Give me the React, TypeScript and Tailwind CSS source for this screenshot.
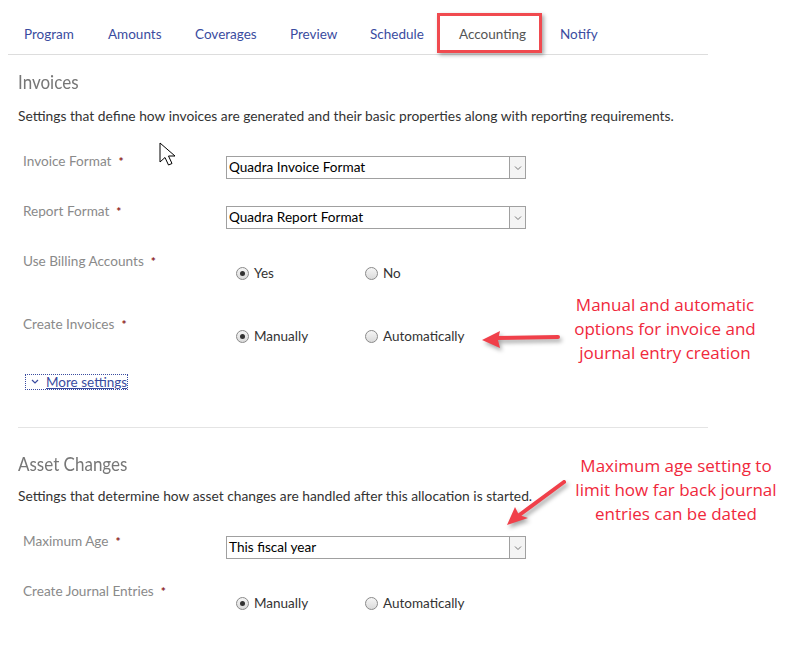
import React from 'react';

const tabs = [
  { name: 'Program', w: 'w-[84px]' },
  { name: 'Amounts', w: 'w-[87px]' },
  { name: 'Coverages', w: 'w-[95px]' },
  { name: 'Preview', w: 'w-[80px]' },
  { name: 'Schedule', w: 'w-[89px]' },
  { name: 'Accounting', w: 'w-[101px]' },
  { name: 'Notify', w: 'w-[80px]' },
];

function Req() {
  return <span className="ml-[7px] text-[#8b1a1a] font-bold text-[12px]">*</span>;
}

function Select({ value }: { value: string }) {
  return (
    <div className="flex w-[300px] h-[23px] border border-[#a0a0a0] bg-white">
      <div className="flex-1 pl-[2px] text-[13.6px] leading-[21px] text-black">{value}</div>
      <div className="w-[16px] border-l border-[#a0a0a0] bg-[#f4f4f4] flex items-center justify-center">
        <svg width="8" height="6" viewBox="0 0 8 6">
          <path d="M1 1.5 L4 4.5 L7 1.5" fill="none" stroke="#777" strokeWidth="1" />
        </svg>
      </div>
    </div>
  );
}

function Radio({ label, checked, w }: { label: string; checked?: boolean; w?: string }) {
  return (
    <div className={`flex items-center h-[20px] ${w ?? ''}`}>
      <span className="w-[13px] h-[13px] rounded-full border border-[#8a8a8a] bg-linear-to-b from-[#f6f6f6] to-[#dadada] flex items-center justify-center">
        {checked && <span className="w-[5px] h-[5px] rounded-full bg-[#333]" />}
      </span>
      <span className="ml-[5px] text-[13.5px] leading-[20px] text-[#333]">{label}</span>
    </div>
  );
}

function Label({ children }: { children: React.ReactNode }) {
  return (
    <div className="w-[208px] pl-[5px] text-[13.6px] leading-[20px] text-[#8a8a8a]">{children}</div>
  );
}

function Heading({ children, className }: { children: React.ReactNode; className: string }) {
  return (
    <h2 className={`${className} text-[20px] leading-[26px] text-[#777] origin-left scale-x-[0.85]`}>{children}</h2>
  );
}

export default function App() {
  return (
    <div className="relative w-[801px] h-[646px] bg-white overflow-hidden" style={{ fontFamily: 'Lato, "Open Sans", sans-serif' }}>
      <div className="w-[708px] pl-[8px]">
        {/* tabs */}
        <div className="flex h-[55px] items-end border-b border-[#dddddd] pb-[10px] pl-[16px]">
          {tabs.map((t) => (
            <div
              key={t.name}
              className={`${t.w} text-[13.5px] leading-[20px] ${t.name === 'Accounting' ? 'text-[#555]' : 'text-[#3a4ca0]'}`}
            >
              {t.name}
            </div>
          ))}
        </div>

        <div className="pl-[10px]">
          {/* Invoices */}
          <Heading className="mt-[13px]">Invoices</Heading>
          <p className="mt-[13px] text-[13.8px] leading-[18px] text-[#333]">
            Settings that define how invoices are generated and their basic properties along with reporting requirements.
          </p>

          <div className="mt-[26px] flex h-[50px]">
            <Label>Invoice Format<Req /></Label>
            <div className="mt-[5px]"><Select value="Quadra Invoice Format" /></div>
          </div>
          <div className="flex h-[50px]">
            <Label>Report Format<Req /></Label>
            <div className="mt-[5px]"><Select value="Quadra Report Format" /></div>
          </div>
          <div className="flex h-[63px]">
            <Label>Use Billing Accounts<Req /></Label>
            <div className="mt-[12px] ml-[10px] flex">
              <Radio label="Yes" checked w="w-[129px]" />
              <Radio label="No" />
            </div>
          </div>
          <div className="flex h-[55px]">
            <Label>Create Invoices<Req /></Label>
            <div className="mt-[12px] ml-[10px] flex">
              <Radio label="Manually" checked w="w-[129px]" />
              <Radio label="Automatically" />
            </div>
          </div>

          <div className="ml-[7px] inline-flex items-center h-[16px] border border-dotted border-[#3a4ca0]">
            <svg width="14" height="10" viewBox="0 0 14 10" className="ml-[2px]">
              <path d="M4 3 L7 6 L10 3" fill="none" stroke="#3a4ca0" strokeWidth="1.2" />
            </svg>
            <span className="ml-[4px] text-[13.5px] leading-[14px] text-[#3a4ca0] underline">More settings</span>
          </div>

          <div className="mt-[34px] border-t border-[#e4e4e4]" />

          {/* Asset changes */}
          <Heading className="mt-[22px]">Asset Changes</Heading>
          <p className="mt-[11px] text-[13.8px] leading-[18px] text-[#333]">
            Settings that determine how asset changes are handled after this allocation is started.
          </p>

          <div className="mt-[26px] flex h-[50px]">
            <Label>Maximum Age<Req /></Label>
            <div className="mt-[5px]"><Select value="This fiscal year" /></div>
          </div>
          <div className="flex h-[50px]">
            <Label>Create Journal Entries<Req /></Label>
            <div className="mt-[12px] ml-[10px] flex">
              <Radio label="Manually" checked w="w-[129px]" />
              <Radio label="Automatically" />
            </div>
          </div>
        </div>
      </div>

      {/* highlight box around active tab */}
      <div className="absolute left-[437px] top-[13px] w-[105px] h-[40px] border-[3px] border-[#f04a4f] shadow-[2px_2px_4px_rgba(0,0,0,0.35)]" />

      {/* cursor */}
      <svg className="absolute left-[159px] top-[142px]" width="22" height="28" viewBox="0 0 22 28">
        <path d="M1 1 L1 20 L6 15.5 L9.5 23 L13 21.5 L9.5 14 L16 14 Z" fill="white" stroke="black" strokeWidth="1" />
      </svg>

      {/* annotation 1 */}
      <svg className="absolute left-[476px] top-[325px]" width="90" height="30" viewBox="0 0 90 30" style={{ filter: 'drop-shadow(2px 3px 2px rgba(0,0,0,0.35))' }}>
        <line x1="20" y1="13" x2="82" y2="12" stroke="#f0404a" strokeWidth="4" strokeLinecap="round" />
        <path d="M6 15 L24 6 L22 15 L24 23 Z" fill="#f0404a" />
      </svg>
      <div className="absolute left-[555px] top-[293px] w-[220px] text-center text-[17px] leading-[24px] text-[#f0283c]" style={{ fontFamily: '"Open Sans", sans-serif' }}>
        Manual and automatic<br />options for invoice and<br />journal entry creation
      </div>

      {/* annotation 2 */}
      <svg className="absolute left-[500px] top-[474px]" width="72" height="60" viewBox="0 0 72 60" style={{ filter: 'drop-shadow(2px 3px 2px rgba(0,0,0,0.35))' }}>
        <line x1="64" y1="8" x2="18" y2="42" stroke="#f0404a" strokeWidth="4" strokeLinecap="round" />
        <path d="M7 51 L15 33 L19 41 L28 44 Z" fill="#f0404a" />
      </svg>
      <div className="absolute left-[556px] top-[454px] w-[240px] text-center text-[17px] leading-[24px] text-[#f0283c]" style={{ fontFamily: '"Open Sans", sans-serif' }}>
        Maximum age setting to<br />limit how far back journal<br />entries can be dated
      </div>
    </div>
  );
}
